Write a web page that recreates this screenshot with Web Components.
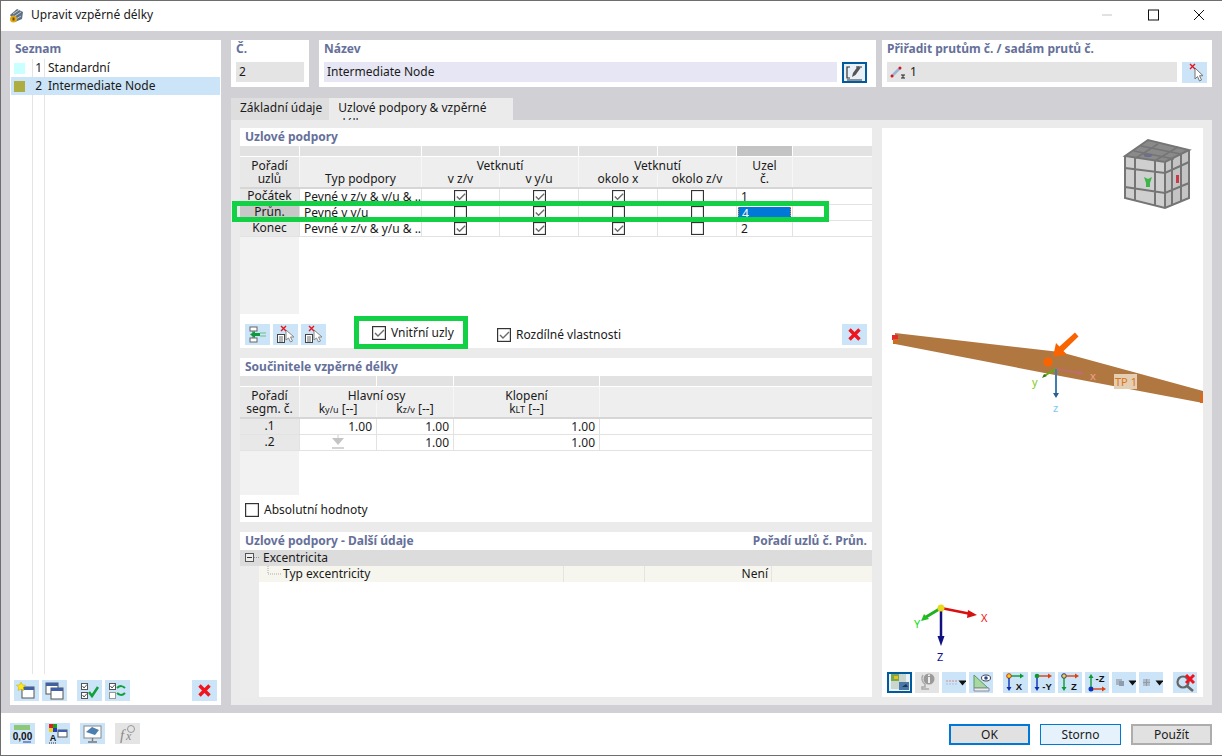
<!DOCTYPE html>
<html lang="cs">
<head>
<meta charset="utf-8">
<title>Upravit vzpěrné délky</title>
<style>
    html, body { margin: 0; padding: 0; }
    body { font: 12px/16px "Noto Sans", "Liberation Sans", sans-serif; color: #1a1a1a; background: #fff; }
</style>
</head>
<body>
<buckling-dialog></buckling-dialog>
<script>
// small svg icons, all drawn on a 25x21 box
const ICONS = {
    newItem: `<rect x="8" y="7" width="12" height="11" fill="#fff" stroke="#555"/><rect x="8" y="7" width="12" height="3" fill="#3f5fa8"/><path d="M7 2l1.4 3 3.2.3-2.4 2.1.8 3.2L7 9l-3 1.6.8-3.2L2.400 5.300 5.600 5z" fill="#ffe81a" stroke="#c9a800" stroke-width=".5"/>`,
    copyItem: `<rect x="4" y="3" width="12" height="11" fill="#fff" stroke="#555"/><rect x="4" y="3" width="12" height="3" fill="#3f5fa8"/><rect x="9" y="8" width="12" height="11" fill="#fff" stroke="#555"/><rect x="9" y="8" width="12" height="3" fill="#3f5fa8"/>`,
    checkAll: `<rect x="4.500" y="3.500" width="6" height="6" fill="#fff" stroke="#555"/><path d="M5.500 6l1.500 2 3-3.500" fill="none" stroke="#555"/><rect x="4.500" y="12.500" width="6" height="6" fill="#fff" stroke="#555"/><path d="M5.500 15l1.500 2 3-3.500" fill="none" stroke="#555"/><path d="M12 12l3 4 6-9" fill="none" stroke="#12a03c" stroke-width="2.500"/>`,
    checkSwap: `<rect x="4.500" y="3.500" width="6" height="6" fill="#fff" stroke="#555"/><path d="M5.500 6l1.500 2 3-3.500" fill="none" stroke="#555"/><rect x="4.500" y="12.500" width="6" height="6" fill="#fff" stroke="#999"/><path d="M12 8c3-3 6-2 8 0M20 13c-3 3-6 2-8 0" fill="none" stroke="#12a03c" stroke-width="2"/>`,
    redX: `<path d="M7.500 5.500l10 10M17.500 5.500l-10 10" stroke="#f0141e" stroke-width="3.400" fill="none"/>`,
    edit: `<path d="M8 5H5v11h3M5 18h15M14 5h6" fill="none" stroke="#333" stroke-width="1.200"/><path d="M10 15l1-4 5-7 2.500 2-5 7z" fill="#555"/>`,
    pick: `<path d="M13 6v11l2.500-2.500 2 4.500 2-1-2-4.300h3.500z" fill="#fff" stroke="#777"/><path d="M8 2l5 5M13 2l-5 5" stroke="#e8141e" stroke-width="1.400"/>`,
    nodeIn: `<rect x="5" y="3" width="7" height="4" fill="#fff" stroke="#666"/><rect x="5" y="14" width="7" height="4" fill="#fff" stroke="#666"/><path d="M8 7v7" stroke="#666"/><path d="M5 10.500l5-3.500v2h5v3h-5v2z" fill="#0e9a3c"/><path d="M15 9h6M15 12h6" stroke="#6cbf8c"/>`,
    nodeDel: `<rect x="4.500" y="10.500" width="7" height="8" fill="#fff" stroke="#444"/><path d="M6 13h4M6 15h4M6 17h4" stroke="#444" stroke-width=".8"/><path d="M13 6v10l2.500-2 2 4 2-1-2-4h3.500z" fill="#fff" stroke="#888"/><path d="M8 2l5 5M13 2l-5 5" stroke="#e8141e" stroke-width="1.400"/>`,
    unit: `<rect x="4" y="2" width="16" height="5" fill="#8cc878"/><text x="12.500" y="17" font-size="10" font-weight="700" text-anchor="middle" fill="#111" font-family="Liberation Sans">0,00</text><path d="M13 19h8" stroke="#2040a0"/>`,
    colors: `<rect x="4" y="1" width="4" height="4" fill="#e02020"/><rect x="8" y="1" width="4" height="4" fill="#20a020"/><rect x="4" y="5" width="4" height="4" fill="#f0d020"/><rect x="8" y="5" width="4" height="4" fill="#2040c0"/><rect x="13" y="7" width="9" height="7" fill="#fff" stroke="#555"/><rect x="13" y="7" width="9" height="2" fill="#3f5fa8"/><text x="8" y="18" font-size="9" font-weight="700" text-anchor="middle" fill="#111" font-family="Liberation Sans">A</text><path d="M4 20h8" stroke="#333" stroke-dasharray="1 1"/>`,
    screen: `<rect x="4" y="3" width="17" height="12" fill="#fff" stroke="#888"/><path d="M6 9l6-5 7 3-4 5z" fill="#4a7fb0"/><path d="M12.500 15v3M8 19h9" stroke="#777" stroke-width="1.400"/>`,
    formula: `<text x="5" y="17" font-size="15" font-style="italic" fill="#888" font-family="Liberation Serif">f</text><text x="11" y="17" font-size="12" font-style="italic" fill="#888" font-family="Liberation Serif">x</text><circle cx="16" cy="6" r="3.500" fill="none" stroke="#999"/>`,
    render: `<rect x="4" y="2" width="15" height="15" fill="#c9d6cc"/><rect x="4" y="2" width="8" height="7" fill="#7ca84c"/><rect x="7" y="4" width="4" height="3" fill="#e8c020"/><rect x="12" y="10" width="10" height="8" fill="#4a76a8"/><path d="M15 15l4-3 2 3z" fill="#16365c"/>`,
    info: `<circle cx="14" cy="7" r="5.500" fill="#9a9a9a"/><rect x="13" y="5" width="2" height="6" fill="#eee"/><rect x="13" y="2.500" width="2" height="1.500" fill="#eee"/><path d="M8 3c-2 3-1 7 2 9v3H7v2h7" fill="none" stroke="#aaa" stroke-width="1.500"/>`,
    lines: `<path d="M4 9h11" stroke="#d88" stroke-dasharray="2 1"/><path d="M4 12h11" stroke="#b9b9d0" stroke-dasharray="2 1"/><path d="M15.500 8.500h8l-4 5z" fill="#111" transform="translate(1 0)"/>`,
    ruler: `<path d="M5 3l14 13H5z" fill="#a8d8a0" stroke="#5a9a6a"/><path d="M5 16h15v3H5z" fill="#e8f0e0" stroke="#88a"/><ellipse cx="17" cy="6" rx="4.500" ry="3" fill="#fff" stroke="#445"/><circle cx="17" cy="6" r="1.800" fill="#2a4a86"/>`,
    viewX: `<circle cx="6" cy="4" r="2.300" fill="#f2d21e" stroke="#d03010"/><path d="M6 6v11" stroke="#0a30b0" stroke-width="1.400"/><path d="M3.500 15h5L6 19z" fill="#0a30b0"/><path d="M8 4h10" stroke="#0a9a30" stroke-width="1.400"/><path d="M17 1.500v5l4-2.500z" fill="#0a9a30"/><text x="16" y="18" font-size="9.500" font-weight="700" text-anchor="middle" fill="#111" font-family="Liberation Sans">X</text>`,
    viewY: `<circle cx="6" cy="4" r="2.300" fill="#0a9a30"/><path d="M6 6v11" stroke="#0a30b0" stroke-width="1.400"/><path d="M3.500 15h5L6 19z" fill="#0a30b0"/><path d="M8 4h10" stroke="#e04010" stroke-width="1.400"/><path d="M17 1.500v5l4-2.500z" fill="#e04010"/><text x="16" y="18" font-size="9.500" font-weight="700" text-anchor="middle" fill="#111" font-family="Liberation Sans">-Y</text>`,
    viewZ: `<circle cx="6" cy="4" r="2.300" fill="#f2d21e" stroke="#2030c0"/><path d="M6 6v11" stroke="#0a9a30" stroke-width="1.400"/><path d="M3.500 15h5L6 19z" fill="#0a9a30"/><path d="M8 4h10" stroke="#e04010" stroke-width="1.400"/><path d="M17 1.500v5l4-2.500z" fill="#e04010"/><text x="16" y="18" font-size="9.500" font-weight="700" text-anchor="middle" fill="#111" font-family="Liberation Sans">Z</text>`,
    viewMinusZ: `<circle cx="6" cy="17" r="2.500" fill="#0a30c0"/><path d="M6 15V5" stroke="#0a9a30" stroke-width="1.400"/><path d="M3.500 6h5L6 2z" fill="#0a9a30"/><path d="M8 17h10" stroke="#e04010" stroke-width="1.400"/><path d="M17 14.500v5l4-2.500z" fill="#e04010"/><text x="15" y="10" font-size="9.500" font-weight="700" text-anchor="middle" fill="#111" font-family="Liberation Sans">-Z</text>`,
    dropA: `<rect x="4" y="7" width="6" height="6" fill="#a8b4c0"/><rect x="7" y="9" width="5" height="5" fill="#8f9cac"/><path d="M16.500 8.500h8l-4 5z" fill="#111"/>`,
    dropB: `<rect x="4" y="7" width="7" height="7" fill="#b0bcc8"/><path d="M7.500 7v7M4 10.500h7" stroke="#8f9cac"/><path d="M16.500 8.500h8l-4 5z" fill="#111"/>`,
    zoomX: `<circle cx="10" cy="10" r="5.500" fill="none" stroke="#666" stroke-width="2.200"/><path d="M14 14l6 5" stroke="#666" stroke-width="2.600"/><path d="M13 3l8 8M21 3l-8 8" stroke="#f0141e" stroke-width="3"/>`
};

class IconButton extends HTMLElement {
    connectedCallback() {
        const w = this.getAttribute("w") || 25;
        this.attachShadow({mode: "open"}).innerHTML = `
        <style>
            :host { display: block; width: ${w}px; height: 21px; background: #cce4f7; flex: none; box-sizing: border-box; }
            :host([off]) { background: #e4e4e4; }
            :host([on]) { outline: 2px solid #005a9e; outline-offset: -2px; background: #e8f0f8; }
            svg { display: block; }
        </style>
        <svg width="${w}" height="21" viewBox="0 0 ${w} 21">${ICONS[this.getAttribute("icon")] || ""}</svg>`;
    }
}

class CheckBox extends HTMLElement {
    connectedCallback() {
        const tick = this.hasAttribute("checked") ? `<path d="M3 7l3 3 6-6" fill="none" stroke="#6a6a6a" stroke-width="1.400"/>` : "";
        this.attachShadow({mode: "open"}).innerHTML = `
        <style>
            :host { display: inline-flex; align-items: center; gap: 5px; flex: none; }
            svg { display: block; }
            :host([small]) svg { width: 13px; height: 13px; }
        </style>
        <svg width="14" height="14" viewBox="0 0 14 14"><rect x=".6" y=".6" width="12.800" height="12.800" fill="#fff" stroke="#333" stroke-width="1.200"/>${tick}</svg>
        <slot></slot>`;
    }
}

class PanelBox extends HTMLElement {
    connectedCallback() {
        this.attachShadow({mode: "open"}).innerHTML = `
        <style>
            :host { display: flex; flex-direction: column; background: #fff; position: relative; box-sizing: border-box; }
            .head { display: flex; justify-content: space-between; height: var(--head, 18px); flex: none; padding: 1px 5px 0; box-sizing: border-box;
                font-weight: 700; color: #65709a; }
        </style>
        <div class="head"><span>${this.getAttribute("heading") || ""}</span><span>${this.getAttribute("aside") || ""}</span></div>
        <slot></slot>`;
    }
}

class MarkFrame extends HTMLElement {
    connectedCallback() {
        this.attachShadow({mode: "open"}).innerHTML = `
        <style>
            :host { display: block; position: absolute; box-sizing: border-box; border: 5px solid #12d145; pointer-events: none; }
        </style>`;
    }
}

class FieldBox extends HTMLElement {
    connectedCallback() {
        this.attachShadow({mode: "open"}).innerHTML = `
        <style>
            :host { display: flex; align-items: center; gap: 4px; height: 20px; background: #e4e4e4; padding: 0 3px; box-sizing: border-box; flex: 1; min-width: 0; }
            :host([tint]) { background: #e6e6f4; }
        </style>
        <slot></slot>`;
    }
}

// grid with grey strip, two header rows, data rows and a grey gutter under the first column
class DataGrid extends HTMLElement {
    set config(cfg) {
        this._cfg = cfg;
        this.render();
    }

    render() {
        const cfg = this._cfg;
        const strip = cfg.columns.map((c, i) => `<i class="${i === cfg.darkColumn ? "dark" : ""}"></i>`).join("");
        const head = cfg.head.map(h => `<div class="hc ${h.cls || ""}" style="grid-column:${h.col};grid-row:${h.row}">${h.text}</div>`).join("");
        const rows = cfg.rows.map(r => r.map((c, i) => {
            const cls = c.cls || "";
            return `<div class="c ${i === 0 ? "rh" : ""} ${cls}">${c.html !== undefined ? c.html : c}</div>`;
        }).join("")).join("");
        this.shadowRoot.innerHTML = `
        <style>
            :host { display: block; flex: none; }
            .strip, .head, .body { display: grid; grid-template-columns: ${cfg.columns.map(c => c + "px").join(" ")}; column-gap: 1px; }
            .strip { height: 10px; margin-bottom: 1px; }
            .strip i { background: #e2e2e2; }
            .strip i.dark { background: #c4c4c4; }
            .head { grid-template-rows: 16px 14px; background: #f7f7f7; border-bottom: 2px solid #d6d6d6; }
            .hc { background: #eeeeee; text-align: center; line-height: 13px; display: flex; align-items: flex-end; justify-content: center; }
            .hc.top { align-items: center; }
            .hc.two { align-items: center; background: #eeeeee; }
            .hc.first { background: #e8e8e8; }
            .hc.low { padding-bottom: 1px; line-height: 14px; }
            .hc sub { font-size: 9px; vertical-align: baseline; position: relative; top: 1px; }
            .body { grid-auto-rows: 15px; row-gap: 1px; background: #e2e2e2; padding-bottom: 1px; }
            .c { background: #fff; padding: 0 4px; white-space: nowrap; overflow: hidden; line-height: 16px; }
            .c.rh { background: #e8e8e8; text-align: center; padding: 0; line-height: 14px; }
            .c.rh.sel { background: #c8c8c8; }
            .c.mid { display: flex; align-items: center; justify-content: center; padding: 0; overflow: visible; }
            .c.num { text-align: right; }
            .c.cur { background: #fff; padding: 2px 1px 0; }
            .c.cur b { display: block; height: 13px; background: #0078d7; color: #fff; font-weight: 400; line-height: 13px; padding-left: 3px;
                border-left: 1px dotted #f08020; border-right: 1px dotted #f08020; }
            .fill { width: ${cfg.columns[0]}px; height: ${cfg.filler}px; background: #f2f2f2; }
            svg { display: block; }
        </style>
        <div class="strip">${strip}</div>
        <div class="head">${head}</div>
        <div class="body">${rows}</div>
        <div class="fill"></div>`;
    }

    constructor() {
        super();
        this.attachShadow({mode: "open"});
    }
}

// the 3d preview with cube, beam and axes
class ModelView extends HTMLElement {
    connectedCallback() {
        this.attachShadow({mode: "open"}).innerHTML = `
        <style>
            :host { display: block; flex: 1; min-height: 0; }
            svg { display: block; }
            text { font-family: "Noto Sans", "Liberation Sans", sans-serif; }
        </style>
        <svg width="321" height="544" viewBox="882 128 321 544">
            <!-- view cube -->
            <path d="M1125 156l23-16 41 10-24 12z" fill="#8a8a8a"/>
            <path d="M1125 156l40 6v46l-40-10z" fill="#cfcfcf"/>
            <path d="M1165 162l24-12v48l-24 10z" fill="#c4c4c4"/>
            <g fill="none" stroke="#757575" stroke-width="2">
                <path d="M1125 156l23-16 41 10-24 12zM1125 156v42l40 10 24-10v-48M1165 162v46"/>
                <path d="M1125 168l40 5 24-11M1125 187l40 6 24-10M1135 158v43M1155 160v46M1172 158v47M1181 154v47"/>
                <path d="M1134 151l40 8M1141 146l40 8M1136 158l22-14M1156 160l22-13" stroke-width="1.500"/>
            </g>
            <path d="M1143 154h10l-2 3h-6z" fill="#6b7088"/>
            <path d="M1144 177l4 2 4-2-2 6v4h-4v-4z" fill="#3db54a"/>
            <rect x="1176" y="175" width="3" height="8" fill="#c83c46"/>

            <!-- member -->
            <path d="M895 333l165 19 143 39v12l-148-28-160-31z" fill="#b07840"/>
            <rect x="892" y="335" width="6" height="5" fill="#e8282e"/>
            <rect x="893" y="339" width="5" height="5" fill="#c8701e"/>
            <rect x="1200" y="394" width="3" height="9" fill="#d86a20"/>
            <rect x="1114" y="374" width="23" height="15" fill="#e4ceb4"/>
            <text x="1115" y="386" font-size="11" fill="#dc7414">TP 1</text>

            <!-- marked node -->
            <circle cx="1048" cy="362" r="4.500" fill="#fa6400"/>
            <path d="M1053 357l3-14 3.500 3.500 15.500-14 3.500 4-15 14.500 3.500 3.500z" fill="#fa6400"/>

            <!-- local axes -->
            <path d="M1056 369l24 4" stroke="#c06a78" stroke-width="1.500"/>
            <path d="M1079 370.500l-1 4.500 6-1.500z" fill="#c06a78"/>
            <text x="1090" y="380" font-size="11" fill="#f0a090">x</text>
            <path d="M1056 369l-12 7" stroke="#5cb010" stroke-width="2"/>
            <path d="M1042 378l2-4 3 2z" fill="#3c7a10"/>
            <text x="1032" y="386" font-size="11" fill="#80cc20">y</text>
            <path d="M1056 369v26" stroke="#4080b0" stroke-width="2"/>
            <path d="M1053 393h6l-3 5z" fill="#2c5f90"/>
            <text x="1053" y="412" font-size="11" fill="#78c8f4">z</text>

            <!-- global axes -->
            <path d="M941 608l30 6" stroke="#d81010" stroke-width="2.500"/>
            <path d="M968 610l9 5-10 3z" fill="#d81010"/>
            <text x="981" y="622" font-size="11" fill="#f01010">X</text>
            <path d="M941 608l-15 9" stroke="#20b020" stroke-width="3"/>
            <path d="M921 621l3-7 5 5z" fill="#20c020"/>
            <text x="914" y="628" font-size="11" fill="#10e010">Y</text>
            <path d="M941 608v32" stroke="#101080" stroke-width="2.500"/>
            <path d="M937.500 636h7l-3.500 10z" fill="#101080"/>
            <text x="937" y="661" font-size="11" fill="#101090">Z</text>
            <circle cx="941" cy="608" r="3.500" fill="#e8d820"/>
        </svg>`;
    }
}

class DialogFooter extends HTMLElement {
    connectedCallback() {
        this.attachShadow({mode: "open"}).innerHTML = `
        <style>
            :host { display: flex; align-items: flex-start; height: 42px; padding: 10px 10px 0 9px; box-sizing: border-box; background: #fff; flex: none; }
            .tools { display: flex; gap: 10px; }
            .btns { display: flex; gap: 10px; margin-left: auto; padding-top: 1px; }
            .b { width: 81px; height: 21px; display: flex; align-items: center; justify-content: center; box-sizing: border-box; background: #e1e1e1; border: 2px solid #adadad; }
            .ok { border-color: #0078d7; }
            .st { background: #e5f1fb; border: 1px solid #0078d7; }
        </style>
        <div class="tools">
            <icon-button icon="unit"></icon-button>
            <icon-button icon="colors"></icon-button>
            <icon-button icon="screen"></icon-button>
            <icon-button icon="formula" off></icon-button>
        </div>
        <div class="btns">
            <div class="b ok">OK</div>
            <div class="b st">Storno</div>
            <div class="b">Použít</div>
        </div>`;
    }
}

class BucklingDialog extends HTMLElement {
    connectedCallback() {
        const root = this.attachShadow({mode: "open"});
        root.innerHTML = `
        <style>
            :host { display: flex; flex-direction: column; width: 1222px; height: 756px; box-sizing: border-box;
                border: 1px solid #6e6e6e; border-width: 1px 0 1px 1px; overflow: hidden; background: #fff; }
            .title { height: 30px; flex: none; display: flex; align-items: center; padding: 0 0 2px 7px; gap: 6px; box-sizing: border-box; }
            .title .ctl { margin-left: auto; display: flex; }
            .title .ctl svg { display: block; width: 46px; height: 30px; }
            .main { flex: 1; min-height: 0; display: flex; gap: 10px; background: #d0d0d5; padding: 9px 10px 8px 9px; }
            .list { width: 211px; flex: none; --head: 19px; }
            .rows { flex: 1; display: flex; flex-direction: column; margin: 0 1px; padding-bottom: 0; height: 615px; flex: none;
                background: linear-gradient(#e4e4e4, #e4e4e4) 21px 0 / 1px 100% no-repeat, linear-gradient(#e4e4e4, #e4e4e4) 33px 0 / 1px 100% no-repeat; }
            .row { height: 18px; display: grid; grid-template-columns: 22px 12px 1fr; align-items: center; }
            .row.sel { background: #cce4f7; }
            .row i { width: 11px; height: 11px; margin-left: 3px; display: block; }
            .row span:nth-of-type(1) { text-align: right; padding-right: 3px; }
            .row span:nth-of-type(2) { padding-left: 3px; }
            .list-tools { display: flex; padding: 6px 4px 4px 4px; gap: 3px; }
            .right { width: 981px; flex: none; display: flex; flex-direction: column; }
            .top { display: flex; height: 47px; flex: none; --head: 22px; }
            .top panel-box { height: 47px; }
            .fieldrow { display: flex; gap: 5px; padding: 0 5px; }
            .tabs { display: flex; height: 22px; margin-top: 11px; flex: none; }
            .tab { padding: 2px 7px 0 9px; background: #dedede; box-sizing: border-box; height: 22px; }
            .tab.on { background: #ebebeb; padding: 2px 9px 0 9px; width: 184px; }
            .tabbody { flex: 1; min-height: 0; display: flex; gap: 10px; background: #ebebeb; padding: 8px 9px 8px 9px; }
            .col { width: 632px; flex: none; display: flex; flex-direction: column; gap: 10px; }
            .p1 { height: 220px; } .p2 { height: 164px; } .p3 { height: 165px; }
            .bar { display: flex; align-items: center; gap: 3px; padding: 10px 5px 0; }
            .bar .rozd { margin-left: 0; }
            .v { width: 122px; margin-left: 43px; }
            .bar .del { margin-left: auto; }
            .abs { padding: 7px 5px 0; display: flex; }
            .tree { flex: 1; display: grid; grid-template-columns: 19px 1fr; grid-template-rows: 16px 16px 1fr; }
            .t-head { grid-column: 1 / 3; background: #dcdcdc; display: flex; align-items: center; }
            .t-head svg, .t-row svg { display: block; flex: none; }
            .gut { background: #ececec; grid-row: 2 / 4; }
            .t-row { background: #f6f6ee; display: grid; grid-template-columns: 305px 81px 127px 1fr; }
            .t-row div { border-right: 1px solid #e4e4e4; display: flex; align-items: center; padding-left: 3px; }
            .t-row div:nth-child(3) { justify-content: flex-end; padding-right: 3px; }
            .view { width: 321px; flex: none; background: #fff; display: flex; flex-direction: column; }
            .vbar { display: flex; gap: 3px; padding: 0 5px 4px; flex: none; }
        </style>
        <div class="title">
            <svg width="17" height="17" viewBox="0 0 17 17"><path d="M2 8l7-6 6 3-1 7-7 3z" fill="#5d7184"/><path d="M5 7l6-4M7 9l6-4M8 12l5-3" stroke="#c2ccd4"/><circle cx="5.500" cy="12" r="3.500" fill="#e0a91c"/><rect x="4.500" y="10.500" width="2" height="3" fill="#6b4a08"/></svg>
            <span>Upravit vzpěrné délky</span>
            <div class="ctl">
                <svg viewBox="0 0 46 30"><path d="M18 15h10" stroke="#c4c4c4"/></svg>
                <svg viewBox="0 0 46 30"><rect x="18.500" y="10" width="10" height="10" fill="none" stroke="#111" stroke-width="1"/></svg>
                <svg viewBox="0 0 46 30"><path d="M18 10l10 10M28 10l-10 10" stroke="#111" fill="none"/></svg>
            </div>
        </div>
        <div class="main">
            <panel-box class="list" heading="Seznam">
                <div class="rows">
                    <div class="row"><i style="background:#c8ffff"></i><span>1</span><span>Standardní</span></div>
                    <div class="row sel"><i style="background:#adad42"></i><span>2</span><span>Intermediate Node</span></div>
                </div>
                <div class="list-tools">
                    <icon-button icon="newItem"></icon-button>
                    <icon-button icon="copyItem"></icon-button>
                    <icon-button icon="checkAll" style="margin-left:7px"></icon-button>
                    <icon-button icon="checkSwap"></icon-button>
                    <icon-button icon="redX" style="margin-left:auto"></icon-button>
                </div>
            </panel-box>
            <div class="right">
                <div class="top">
                    <panel-box heading="Č." style="width:78px"><div class="fieldrow"><field-box>2</field-box></div></panel-box>
                    <panel-box heading="Název" style="width:557px;margin-left:10px"><div class="fieldrow"><field-box tint>Intermediate Node</field-box><icon-button icon="edit" on style="margin-right:4px"></icon-button></div></panel-box>
                    <panel-box heading="Přiřadit prutům č. / sadám prutů č." style="width:330px;margin-left:6px"><div class="fieldrow"><field-box>
                        <svg width="16" height="14" viewBox="0 0 16 14"><path d="M2 11l8-8" stroke="#9ab4d4" stroke-width="2.500"/><circle cx="2" cy="11" r="1.500" fill="#e01018"/><circle cx="10" cy="3" r="1.500" fill="#e01018"/><path d="M11 10h4M13 10v3M11 13h4" stroke="#222"/></svg>
                        <span>1</span></field-box><icon-button icon="pick"></icon-button></div></panel-box>
                </div>
                <div class="tabs"><div class="tab">Základní údaje</div><div class="tab on">Uzlové podpory &amp; vzpěrné délky</div></div>
                <div class="tabbody">
                    <div class="col">
                        <panel-box class="p1" heading="Uzlové podpory">
                            <data-grid id="supports"></data-grid>
                            <div class="bar">
                                <icon-button icon="nodeIn"></icon-button>
                                <icon-button icon="nodeDel"></icon-button>
                                <icon-button icon="nodeDel"></icon-button>
                                <div class="v"><check-box checked>Vnitřní uzly</check-box></div>
                                <check-box class="rozd" checked>Rozdílné vlastnosti</check-box>
                                <icon-button class="del" icon="redX"></icon-button>
                            </div>
                            <mark-frame style="left:-8px;top:73px;width:597px;height:21px"></mark-frame>
                            <mark-frame style="left:114px;top:188px;width:114px;height:33px"></mark-frame>
                        </panel-box>
                        <panel-box class="p2" heading="Součinitele vzpěrné délky">
                            <data-grid id="factors"></data-grid>
                            <div class="abs"><check-box>Absolutní hodnoty</check-box></div>
                        </panel-box>
                        <panel-box class="p3" heading="Uzlové podpory - Další údaje" aside="Pořadí uzlů č. Průn.">
                            <div class="tree">
                                <div class="t-head">
                                    <svg width="19" height="16" viewBox="0 0 19 16"><rect x="5.500" y="3.500" width="8" height="8" fill="#eee" stroke="#555"/><path d="M7 7.500h5" stroke="#333"/><path d="M14 7.500h5" stroke="#999" stroke-dasharray="1 1"/></svg>
                                    <span style="margin-left:4px">Excentricita</span>
                                </div>
                                <div class="gut"></div>
                                <div class="t-row">
                                    <div style="padding-left:0"><svg width="24" height="16" viewBox="0 0 24 16"><path d="M9 0v8h14" stroke="#aaa" fill="none" stroke-dasharray="1 1"/></svg>Typ excentricity</div>
                                    <div></div>
                                    <div>Není</div>
                                    <div style="border:0"></div>
                                </div>
                            </div>
                        </panel-box>
                    </div>
                    <div class="view">
                        <model-view></model-view>
                        <div class="vbar">
                            <icon-button icon="render" on></icon-button>
                            <icon-button icon="info" off w="24"></icon-button>
                            <icon-button icon="lines" w="24"></icon-button>
                            <icon-button icon="ruler" w="24"></icon-button>
                            <icon-button icon="viewX" style="margin-left:7px"></icon-button>
                            <icon-button icon="viewY" w="24"></icon-button>
                            <icon-button icon="viewZ" w="24"></icon-button>
                            <icon-button icon="viewMinusZ" w="24"></icon-button>
                            <icon-button icon="dropA" w="24"></icon-button>
                            <icon-button icon="dropB" w="24"></icon-button>
                            <icon-button icon="zoomX" w="24" style="margin-left:7px"></icon-button>
                        </div>
                    </div>
                </div>
            </div>
        </div>
        <dialog-footer></dialog-footer>`;

        const box = on => ({cls: "mid", html: `<check-box small ${on ? "checked" : ""}></check-box>`});
        root.querySelector("#supports").config = {
            columns: [59, 121, 77, 78, 78, 78, 55, 79],
            darkColumn: 6,
            filler: 77,
            head: [
                {col: "1", row: "1 / 3", text: "Pořadí<br>uzlů", cls: "two first"},
                {col: "2", row: "1 / 3", text: "Typ podpory", cls: "low"},
                {col: "3 / 5", row: "1", text: "Vetknutí", cls: "top"},
                {col: "5 / 7", row: "1", text: "Vetknutí", cls: "top"},
                {col: "3", row: "2", text: "v z/v", cls: "low"},
                {col: "4", row: "2", text: "v y/u", cls: "low"},
                {col: "5", row: "2", text: "okolo x", cls: "low"},
                {col: "6", row: "2", text: "okolo z/v", cls: "low"},
                {col: "7", row: "1 / 3", text: "Uzel<br>č.", cls: "two"},
                {col: "8", row: "1 / 3", text: ""}
            ],
            rows: [
                ["Počátek", "Pevné v z/v &amp; y/u &amp; ...", box(1), box(1), box(1), box(0), "1", ""],
                [{cls: "sel", html: "Průn."}, "Pevné v y/u", box(0), box(1), box(0), box(0), {cls: "cur", html: "<b>4</b>"}, ""],
                ["Konec", "Pevné v z/v &amp; y/u &amp; ...", box(1), box(1), box(1), box(0), "2", ""]
            ]
        };
        const num = {cls: "num", html: "1.00"};
        const arrow = {cls: "mid", html: `<svg width="14" height="15" viewBox="0 0 14 15"><path d="M7 0v3" stroke="#ccc"/><path d="M1 3h12L7 10z" fill="#c4c4c4"/><path d="M1 13h12" stroke="#c4c4c4" stroke-width="1.500"/></svg>`};
        root.querySelector("#factors").config = {
            columns: [59, 76, 76, 145, 272],
            filler: 44,
            head: [
                {col: "1", row: "1 / 3", text: "Pořadí<br>segm. č.", cls: "two first"},
                {col: "2 / 4", row: "1", text: "Hlavní osy", cls: "top"},
                {col: "2", row: "2", text: "k<sub>y/u</sub>&nbsp;[--]", cls: "low"},
                {col: "3", row: "2", text: "k<sub>z/v</sub>&nbsp;[--]", cls: "low"},
                {col: "4", row: "1", text: "Klopení", cls: "top"},
                {col: "4", row: "2", text: "k<sub>LT</sub>&nbsp;[--]", cls: "low"},
                {col: "5", row: "1 / 3", text: ""}
            ],
            rows: [
                [".1", num, num, num, ""],
                [".2", arrow, num, num, ""]
            ]
        };
    }
}

customElements.define("icon-button", IconButton);
customElements.define("check-box", CheckBox);
customElements.define("panel-box", PanelBox);
customElements.define("mark-frame", MarkFrame);
customElements.define("field-box", FieldBox);
customElements.define("data-grid", DataGrid);
customElements.define("model-view", ModelView);
customElements.define("dialog-footer", DialogFooter);
customElements.define("buckling-dialog", BucklingDialog);
</script>
</body>
</html>
